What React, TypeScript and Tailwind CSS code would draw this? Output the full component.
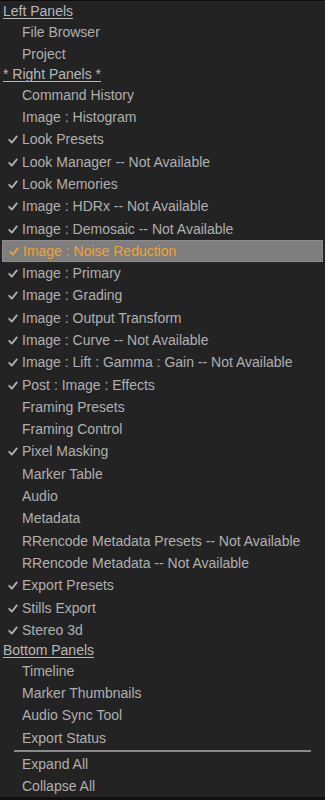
import React from "react";

type Row =
  | { kind: "header"; label: string }
  | { kind: "item"; label: string; checked?: boolean; active?: boolean }
  | { kind: "sep" };

const rows: Row[] = [
  { kind: "header", label: "Left Panels" },
  { kind: "item", label: "File Browser" },
  { kind: "item", label: "Project" },
  { kind: "header", label: "* Right Panels *" },
  { kind: "item", label: "Command History" },
  { kind: "item", label: "Image : Histogram" },
  { kind: "item", label: "Look Presets", checked: true },
  { kind: "item", label: "Look Manager -- Not Available", checked: true },
  { kind: "item", label: "Look Memories", checked: true },
  { kind: "item", label: "Image : HDRx -- Not Available", checked: true },
  { kind: "item", label: "Image : Demosaic -- Not Available", checked: true },
  { kind: "item", label: "Image : Noise Reduction", checked: true, active: true },
  { kind: "item", label: "Image : Primary", checked: true },
  { kind: "item", label: "Image : Grading", checked: true },
  { kind: "item", label: "Image : Output Transform", checked: true },
  { kind: "item", label: "Image : Curve -- Not Available", checked: true },
  { kind: "item", label: "Image : Lift : Gamma : Gain -- Not Available", checked: true },
  { kind: "item", label: "Post : Image : Effects", checked: true },
  { kind: "item", label: "Framing Presets" },
  { kind: "item", label: "Framing Control" },
  { kind: "item", label: "Pixel Masking", checked: true },
  { kind: "item", label: "Marker Table" },
  { kind: "item", label: "Audio" },
  { kind: "item", label: "Metadata" },
  { kind: "item", label: "RRencode Metadata Presets -- Not Available" },
  { kind: "item", label: "RRencode Metadata -- Not Available" },
  { kind: "item", label: "Export Presets", checked: true },
  { kind: "item", label: "Stills Export", checked: true },
  { kind: "item", label: "Stereo 3d", checked: true },
  { kind: "header", label: "Bottom Panels" },
  { kind: "item", label: "Timeline" },
  { kind: "item", label: "Marker Thumbnails" },
  { kind: "item", label: "Audio Sync Tool" },
  { kind: "item", label: "Export Status" },
  { kind: "sep" },
  { kind: "item", label: "Expand All" },
  { kind: "item", label: "Collapse All" },
];

function Check({ color }: { color: string }) {
  return (
    <svg width="10" height="9" viewBox="0 0 10 9" className="shrink-0">
      <path d="M1.2 4.8 L3.8 7.6 L8.8 1.4" fill="none" stroke={color} strokeWidth="1.8" strokeLinecap="round" strokeLinejoin="round" />
    </svg>
  );
}

export default function App() {
  return (
    <div
      className="w-[325px] h-[800px] bg-[#232323] border-t border-t-[#0c0c0c] border-b-[3px] border-b-[#101010] flex flex-col text-[14px] text-[#b0b0b0] overflow-hidden"
      style={{ fontFamily: '"Liberation Sans", Arial, sans-serif' }}
    >
      <div className="flex flex-col pt-[1.5px]">
        {rows.map((r, i) => {
          if (r.kind === "header")
            return (
              <div key={i} className="h-[18.5px] flex items-center pl-[3px] text-[#b8b8b8]">
                <span className="underline underline-offset-[2px] decoration-1">{r.label}</span>
              </div>
            );
          if (r.kind === "sep")
            return (
              <div key={i} className="h-[4px] flex items-center px-[14px]">
                <div className="h-[2px] w-full bg-[#8a8a8a]" />
              </div>
            );
          return (
            <div
              key={i}
              className={
                r.active
                  ? "h-[22.3px] flex items-center mx-[2px] bg-[#7e7e7e] border border-[#8c8c8c] text-[#f3a12c]"
                  : "h-[22.3px] flex items-center mx-[2px]"
              }
            >
              <div className="w-[20px] flex justify-center pl-[1px]">
                {r.checked && <Check color={r.active ? "#f3a12c" : "#b0b0b0"} />}
              </div>
              <span className="whitespace-nowrap">{r.label}</span>
            </div>
          );
        })}
      </div>
    </div>
  );
}
